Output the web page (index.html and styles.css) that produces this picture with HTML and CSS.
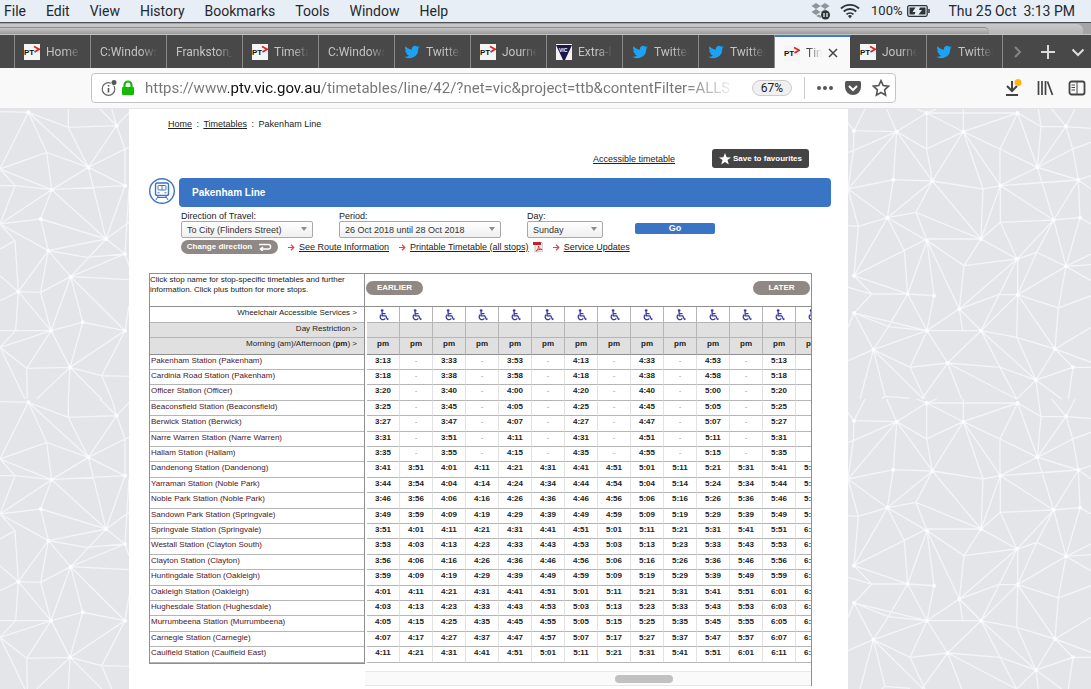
FILE: index.html
```
<!DOCTYPE html>
<html lang="en">
<head>
    <meta charset="utf-8">
    <title>Pakenham Line</title>
    <link rel="stylesheet" href="styles.css">
</head>
<body>
    <svg class="defs" width="0" height="0">
        <symbol id="ptv" viewBox="0 0 16 16">
            <rect width="16" height="16" fill="#f5f5f5"/>
            <text class="logo-text" x="0" y="11" fill="#111">PT</text>
            <path d="M10 2.500L15.200 5.200L10.500 8" fill="none" stroke="#e02020" stroke-width="1.600"/>
        </symbol>
        <symbol id="twitter" viewBox="0 0 24 24">
            <path fill="#1da1f2" d="M23.6 4.9c-.8.4-1.700.6-2.700.8 1-.6 1.700-1.500 2-2.600-.9.5-1.900.9-3 1.100a4.700 4.700 0 0 0-8 4.300C8 8.300 4.500 6.400 2.200 3.500a4.700 4.700 0 0 0 1.500 6.300c-.8 0-1.500-.2-2.100-.6 0 2.300 1.600 4.200 3.800 4.700-.7.2-1.400.2-2.100.1.6 1.900 2.300 3.200 4.400 3.300A9.500 9.500 0 0 1 .7 19.200 13.400 13.400 0 0 0 21.300 7.300c.9-.6 1.700-1.500 2.300-2.400z"/>
        </symbol>
        <symbol id="vic" viewBox="0 0 16 16">
            <rect width="16" height="16" fill="#f2f2f2"/>
            <path d="M0 1H16L9 16H7z" fill="#1d1748"/>
            <text class="logo-text small" x="3" y="8" fill="#fff">VIC</text>
        </symbol>
        <symbol id="wheelchair" viewBox="0 0 12 13">
            <circle cx="4.500" cy="1.700" r="1.500" fill="#3b3b9c"/>
            <path d="M4.500 3v4.500h4l1.800 3.700 1.300-.6M4.700 5h3.500M3.300 6.200a3.100 3.100 0 1 0 4.700 4" fill="none" stroke="#3b3b9c" stroke-width="1.400"/>
        </symbol>
        <symbol id="arrow" viewBox="0 0 7 7">
            <path d="M0 3.500h5.500M3 .8l2.800 2.700L3 6.200" fill="none" stroke="#e5404e" stroke-width="1.200"/>
        </symbol>
    </svg>

    <header class="menubar">
        <nav class="menus">
            <span>File</span><span>Edit</span><span>View</span><span>History</span><span>Bookmarks</span><span>Tools</span><span>Window</span><span>Help</span>
        </nav>
        <div class="status">
            <svg width="20" height="18" viewBox="0 0 20 18">
                <path d="M5 1l4.500 3L5 7 .5 4zM14 1l4.500 3L14 7 9.500 4zM5 7l4.500 3L5 13 .5 10zM14 7l4 3-4 3-4.500-3zM5 14l3-1.500 2 1.500v2z" fill="#8d949b"/>
                <circle cx="14.500" cy="13" r="4.500" fill="#2e3338"/>
                <path d="M13 11v4M16 11v4" stroke="#fff" stroke-width="1.200"/>
            </svg>
            <svg class="wifi" width="20" height="16" viewBox="0 0 20 16">
                <path d="M1 5.500a13 13 0 0 1 18 0M3.700 8.500a9.200 9.200 0 0 1 12.600 0M6.500 11.400a5.200 5.200 0 0 1 7 0" fill="none" stroke="#2e3338" stroke-width="1.800"/>
                <path d="M8 13l2 2.500 2-2.500a3 3 0 0 0-4 0z" fill="#2e3338"/>
            </svg>
            <span class="charge">100%</span>
            <svg width="24" height="14" viewBox="0 0 24 14">
                <rect x=".7" y="1.700" width="19.500" height="10.600" rx="1.500" fill="none" stroke="#2e3338" stroke-width="1.300"/>
                <path d="M2.500 3.500h6l-3 4.500h3l-1 2.500h-5zM13 3.500h5.500v7h-7l3.500-4.500h-3z" fill="#2e3338"/>
                <path d="M22 5v4" stroke="#2e3338" stroke-width="1.500"/>
            </svg>
            <span class="clock">Thu 25 Oct&nbsp; 3:13 PM</span>
        </div>
    </header>

    <div class="behind"><div class="behind-back"><div class="behind-front"></div></div></div>

    <div class="tabs">
        <div class="tab first"></div>
        <div class="tab"><svg><use href="#ptv"/></svg><span>Home</span></div>
        <div class="tab"><span>C:Windows</span></div>
        <div class="tab"><span>Frankston_</span></div>
        <div class="tab"><svg><use href="#ptv"/></svg><span>Timeta</span></div>
        <div class="tab"><span>C:Windows</span></div>
        <div class="tab"><svg><use href="#twitter"/></svg><span>Twitter</span></div>
        <div class="tab"><svg><use href="#ptv"/></svg><span>Journe</span></div>
        <div class="tab"><svg><use href="#vic"/></svg><span>Extra-l</span></div>
        <div class="tab"><svg><use href="#twitter"/></svg><span>Twitter</span></div>
        <div class="tab"><svg><use href="#twitter"/></svg><span>Twitter</span></div>
        <div class="tab active"><svg><use href="#ptv"/></svg><span>Tim</span>
            <button class="close" aria-label="Close tab"><svg viewBox="0 0 10 10"><path d="M1 1l8 8M9 1L1 9" stroke="#444" stroke-width="1.500"/></svg></button>
        </div>
        <div class="tab"><svg><use href="#ptv"/></svg><span>Journe</span></div>
        <div class="tab"><svg><use href="#twitter"/></svg><span>Twitter</span></div>
        <div class="tab-tools">
            <button aria-label="Scroll tabs"><svg width="14" height="14" viewBox="0 0 14 14"><path d="M4 2l5 5-5 5" fill="none" stroke="#858585" stroke-width="2"/></svg></button>
            <button aria-label="New tab"><svg width="14" height="14" viewBox="0 0 14 14"><path d="M7 0v14M0 7h14" stroke="#ddd" stroke-width="2"/></svg></button>
            <button aria-label="All tabs"><svg width="14" height="14" viewBox="0 0 14 14"><path d="M1.500 4.500L7 10l5.500-5.500" fill="none" stroke="#ddd" stroke-width="2"/></svg></button>
        </div>
    </div>

    <div class="toolbar">
        <div class="urlbar">
            <svg width="16" height="18" viewBox="0 0 16 18">
                <circle cx="7.500" cy="10" r="6.300" fill="none" stroke="#666" stroke-width="1.200"/>
                <path d="M7.500 9v4.500M7.500 6v1.600" stroke="#555" stroke-width="1.600"/>
                <circle cx="13" cy="3.500" r="3.300" fill="#fff"/><circle cx="13" cy="3.500" r="2.500" fill="#555"/>
            </svg>
            <svg class="lock" width="14" height="16" viewBox="0 0 14 16">
                <path d="M3.500 8V5a3.500 3.500 0 0 1 7 0v3" fill="none" stroke="#12bc00" stroke-width="2.200"/>
                <rect x="1" y="7" width="12" height="8" rx="1" fill="#12bc00"/>
            </svg>
            <input class="url" type="text" aria-label="Address" value="https://www.ptv.vic.gov.au/timetables/line/42/?net=vic&amp;project=ttb&amp;contentFilter=ALLS">
            <button class="zoom">67%</button>
            <div class="url-actions">
                <svg width="18" height="18" viewBox="0 0 18 18" fill="#555"><circle cx="3" cy="9" r="2"/><circle cx="9" cy="9" r="2"/><circle cx="15" cy="9" r="2"/></svg>
                <svg width="18" height="18" viewBox="0 0 18 18"><path d="M2.500 2h13Q17 2 17 3.500V8a8 8 0 0 1-16 0V3.500Q1 2 2.500 2z" fill="#555"/><path d="M5 7l4 4 4-4" fill="none" stroke="#fff" stroke-width="2"/></svg>
                <svg width="18" height="18" viewBox="0 0 18 18"><path d="M9 1.700l2.200 4.900 5.300.6-3.900 3.600 1 5.300L9 13.500l-4.600 2.600 1-5.300-3.900-3.600 5.300-.6z" fill="none" stroke="#555" stroke-width="1.600"/></svg>
            </div>
        </div>
        <div class="tools">
            <svg width="18" height="20" viewBox="0 0 18 20"><path d="M8 3v10M3 8l5 5 5-5M2 17h12" fill="none" stroke="#444" stroke-width="2"/><circle cx="14" cy="4.500" r="3.500" fill="#ffb515"/></svg>
            <svg width="18" height="18" viewBox="0 0 18 18"><path d="M2.500 2v14M6 2v14M9.500 2v14M11.500 2.500l5 13.500" fill="none" stroke="#444" stroke-width="1.700"/></svg>
            <svg width="18" height="18" viewBox="0 0 18 18"><rect x="1.500" y="2.500" width="15" height="13" rx="2" fill="none" stroke="#444" stroke-width="1.800"/><path d="M9 3v12M3.500 6h3.500M3.500 8.500h3.500M3.500 11h3.500" stroke="#444"/></svg>
        </div>
    </div>

    <div class="viewport">
        <svg class="mesh" viewBox="0 0 387 1740" preserveAspectRatio="xMinYMin slice">
            <g id="mesh-left">
                <path d="M0 8L85 10L205 55L350 50M85 10L0 180M85 10L140 130L155 242M85 10L265 175L140 130L0 180M205 0V55L265 175L350 50L300 0M335 0L350 50L387 10M350 50L375 120L265 175M387 115L375 120V230L265 175L155 242L0 180L45 230H0M45 230L155 242L375 230M45 230L0 345L155 242L122 330L0 345M122 330L145 425L0 345L45 395L55 548M45 395L0 420M155 242L318 390L265 175M375 230L318 390L122 330M318 390L145 425M387 470L375 435L318 390L212 503L375 435M318 390L387 340M375 435L387 240M145 425L260 445L375 435M145 425L212 503L387 512M145 425L55 548L0 500M145 425L122 550L55 548L0 575M122 550L212 503L153 665L122 550M212 503L248 640L153 665L47 665L55 548L153 665M212 503L375 665L248 640L210 775L375 665L387 590M375 665L305 800L210 775L153 665M47 665L0 715L153 665L80 778L0 715M80 778L210 775M80 778L82 870M47 665H0M0 715L75 870M110 870L210 775L205 870M210 775L305 870M305 800L387 802M305 800L335 870"/>
                <path class="nodes" d="M85 10h0M350 50h0M265 175h0M155 242h0M375 230h0M122 330h0M318 390h0M145 425h0M375 435h0M212 503h0M55 548h0M248 640h0M153 665h0M375 665h0M210 775h0"/>
            </g>
            <use href="#mesh-left" y="870"/>
        </svg>

        <main class="page">
            <nav class="crumbs"><a href="#">Home</a> <i>:</i> <a href="#">Timetables</a> <i>:</i> Pakenham Line</nav>

            <div class="actions">
                <a href="#">Accessible timetable</a>
                <button class="save"><svg width="12" height="12" viewBox="0 0 12 12"><path d="M6 0l1.600 4.200 4.400.2-3.500 2.700L9.800 11.500 6 9 2.200 11.500l1.300-4.400L0 4.400l4.400-.2z" fill="#fff"/></svg>Save to favourites</button>
            </div>

            <div class="line">
                <svg width="26" height="26" viewBox="0 0 26 26" fill="none" stroke="#3a74c4">
                    <circle cx="13" cy="13" r="12.300" stroke-width="1.400"/>
                    <rect x="6.500" y="5" width="13" height="12.500" rx="1.800" stroke-width="1.400"/>
                    <rect x="9" y="7.500" width="8" height="4.500" rx=".6"/>
                    <path d="M13 7.500V12M8.500 14.800h2M15.500 14.800h2M9.500 17.500L7 22M16.500 17.500L19 22M8.500 19.500h9"/>
                </svg>
                <h1>Pakenham Line</h1>
            </div>

            <form class="filters" onsubmit="return false">
                <div class="field direction">
                    <label for="direction">Direction of Travel:</label>
                    <div class="select"><select id="direction"><option>To City (Flinders Street)</option></select></div>
                </div>
                <div class="field period">
                    <label for="period">Period:</label>
                    <div class="select"><select id="period"><option>26 Oct 2018 until 28 Oct 2018</option></select></div>
                </div>
                <div class="field day">
                    <label for="day">Day:</label>
                    <div class="select"><select id="day"><option>Sunday</option></select></div>
                </div>
                <button class="go">Go</button>
            </form>

            <div class="links">
                <button class="pill change">Change direction
                    <svg width="14" height="8" viewBox="0 0 14 8"><path d="M1 1.500h9.500a2 2 0 0 1 2 2.500a2 2 0 0 1-2 2H3M5 4L2.500 6 5 8" fill="none" stroke="#fff" stroke-width="1.500"/></svg>
                </button>
                <span class="link"><svg><use href="#arrow"/></svg><a href="#">See Route Information</a></span>
                <span class="link"><svg><use href="#arrow"/></svg><a href="#">Printable Timetable (all stops)</a><svg class="pdf" viewBox="0 0 10 10"><path d="M2 0h6l2 2v8H2z" fill="#eee" stroke="#aaa" stroke-width=".7"/><path d="M0 0h8v3H0z" fill="#c2202a"/><path d="M3 9c2-1.500 2.500-3 2.500-5 0 2 1.500 3 3.500 3.500-2-.3-4 0-6 1.500" fill="none" stroke="#d33"/></svg></span>
                <span class="link"><svg><use href="#arrow"/></svg><a href="#">Service Updates</a></span>
            </div>

            <div class="timetable">
                <table class="stops">
                    <thead>
                        <tr class="intro"><th>Click stop name for stop-specific timetables and further information. Click plus button for more stops.</th></tr>
                        <tr class="access"><th>Wheelchair Accessible Services &gt;</th></tr>
                        <tr class="restrict"><th>Day Restriction &gt;</th></tr>
                        <tr class="ampm"><th>Morning (am)/Afternoon (<b>pm</b>) &gt;</th></tr>
                    </thead>
                    <tbody id="stops"></tbody>
                </table>
                <div class="services">
                    <div class="pager">
                        <button class="pill">EARLIER</button>
                        <button class="pill">LATER</button>
                    </div>
                    <table class="times">
                        <thead>
                            <tr class="access" id="access"></tr>
                            <tr class="restrict" id="restrict"></tr>
                            <tr class="ampm" id="ampm"></tr>
                        </thead>
                        <tbody id="times"></tbody>
                    </table>
                    <div class="track"><div class="thumb"></div></div>
                </div>
            </div>
        </main>

        <svg class="mesh" viewBox="9 0 729 1740" preserveAspectRatio="xMinYMin slice">
            <g id="mesh-right">
                <path d="M245 12H518M215 0L245 12L275 0M245 12L155 68L27 65L60 0M0 30L27 65L25 125L9 240M155 68L125 0M155 68L245 120L245 12M155 68L25 125L9 130M155 68L9 240M155 68L145 212L262 216L245 120L355 68L245 12M155 68L262 216L355 68L518 12M355 68V0M355 68L414 240L262 216M355 68L466 230M355 68L465 120L518 12L588 53H663L738 58M518 12L577 175L588 53L580 0M465 120V230L577 175L465 120M620 0L663 52L690 0M663 52L577 175L683 120L663 52M738 100L683 120L700 213L577 175L626 333L466 230L700 213L738 200M577 175L683 120M700 213L626 333L705 326L700 213L738 240M145 212L9 240L127 326L145 212M262 216L127 326L213 310L262 216L408 390L414 240L466 230L408 390L213 310L246 395L127 326L40 352L9 350M9 240L40 352L27 500L127 326L178 425L188 555M466 230V340L626 333L516 450L466 340L408 390H246L27 500M246 395L188 555L27 500L80 555H188L267 560L246 395L343 600L357 470L246 395M357 470L408 390L516 450L357 470M516 450L343 600L460 557H518V450L575 430L626 333L663 472L705 326L738 345M516 450L408 665L518 557L575 430L663 472L738 435M663 472L738 467M663 472L738 515M663 472L518 557L640 597L663 472M738 560L640 597L630 720L518 557L515 685L630 720L738 655M9 535L80 555L27 612L9 655M27 612L130 653L188 555L246 665L130 653L85 722L27 612L246 665M267 560L246 665L343 600L353 665M343 600L408 665H246L85 722L9 755M246 665L195 775L85 722L45 870M246 665L308 762L408 665L515 685L573 813L630 720L684 775H738M630 720L738 760M408 665L465 775L573 813L408 665M465 775L308 762L195 775L240 870M308 762L230 870M308 762L350 870M308 762L515 870M465 775L515 870L573 813L684 775L670 870M573 813L580 870M573 813L650 870M85 722L120 862L195 868M85 722L235 870M120 862L110 870"/>
                <path class="nodes" d="M245 12h0M518 12h0M155 68h0M355 68h0M27 65h0M663 52h0M577 175h0M145 212h0M262 216h0M466 230h0M700 213h0M127 326h0M626 333h0M705 326h0M246 395h0M408 390h0M516 450h0M663 472h0M27 500h0M188 555h0M267 560h0M343 600h0M518 557h0M27 612h0M246 665h0M408 665h0M85 722h0M630 720h0M308 762h0M573 813h0M684 775h0"/>
            </g>
            <use href="#mesh-right" y="870"/>
        </svg>
    </div>

    <script>
        // stop name, first departure, does every train stop here
        const stops = [
            ['Pakenham Station (Pakenham)', '3:13', false],
            ['Cardinia Road Station (Pakenham)', '3:18', false],
            ['Officer Station (Officer)', '3:20', false],
            ['Beaconsfield Station (Beaconsfield)', '3:25', false],
            ['Berwick Station (Berwick)', '3:27', false],
            ['Narre Warren Station (Narre Warren)', '3:31', false],
            ['Hallam Station (Hallam)', '3:35', false],
            ['Dandenong Station (Dandenong)', '3:41', true],
            ['Yarraman Station (Noble Park)', '3:44', true],
            ['Noble Park Station (Noble Park)', '3:46', true],
            ['Sandown Park Station (Springvale)', '3:49', true],
            ['Springvale Station (Springvale)', '3:51', true],
            ['Westall Station (Clayton South)', '3:53', true],
            ['Clayton Station (Clayton)', '3:56', true],
            ['Huntingdale Station (Oakleigh)', '3:59', true],
            ['Oakleigh Station (Oakleigh)', '4:01', true],
            ['Hughesdale Station (Hughesdale)', '4:03', true],
            ['Murrumbeena Station (Murrumbeena)', '4:05', true],
            ['Carnegie Station (Carnegie)', '4:07', true],
            ['Caulfield Station (Caulfield East)', '4:11', true]
        ];
        const trains = 14;
        const interval = 10;

        function addMinutes(time, minutes) {
            const parts = time.split(':');
            const total = parts[0] * 60 + Number(parts[1]) + minutes;
            return Math.floor(total / 60) + ':' + String(total % 60).padStart(2, '0');
        }

        function fill(id, html) {
            document.getElementById(id).innerHTML = html;
        }

        fill('access', '<td><svg class="chair"><use href="#wheelchair"/></svg></td>'.repeat(trains));
        fill('restrict', '<td></td>'.repeat(trains));
        fill('ampm', '<td>pm</td>'.repeat(trains));

        let names = '';
        let times = '';
        for (const [name, first, all] of stops) {
            names += '<tr><td><a href="#">' + name + '</a></td></tr>';
            times += '<tr>';
            for (let i = 0; i < trains; i++) {
                if (all || i % 2 === 0) {
                    times += '<td>' + addMinutes(first, i * interval) + '</td>';
                } else {
                    times += '<td class="none">-</td>';
                }
            }
            times += '</tr>';
        }
        fill('stops', names);
        fill('times', times);
    </script>
</body>
</html>
```
FILE: styles.css
```
* {
    box-sizing: border-box;
}

body {
    margin: 0;
    height: 100vh;
    display: flex;
    flex-direction: column;
    overflow: hidden;
    font-family: "Liberation Sans", Arial, sans-serif;
    font-size: 9px;
    line-height: 12px;
    color: #222;
}

button {
    font-family: inherit;
    border: none;
    padding: 0;
    cursor: pointer;
}

svg {
    flex: none;
    display: block;
}

.defs {
    position: absolute;
}

.logo-text {
    font-family: "Liberation Sans", Arial, sans-serif;
    font-size: 8px;
    font-weight: bold;
}

.logo-text.small {
    font-size: 5px;
}

/* menu bar */
.menubar {
    display: flex;
    justify-content: space-between;
    align-items: center;
    height: 23px;
    flex: none;
    padding: 0 16px 0 4px;
    background: #e8eef5;
    border-bottom: 1px solid #4b5055;
    font-family: Roboto, sans-serif;
    font-size: 14px;
    line-height: 20px;
    color: #23282d;
}

.menus {
    display: flex;
    gap: 20px;
}

.status {
    display: flex;
    align-items: center;
}

.wifi {
    margin: 0 11px 0 9px;
}

.charge {
    font-size: 13px;
    margin-right: 4px;
}

.clock {
    margin-left: 18px;
}

.behind {
    height: 12px;
    flex: none;
    padding: 1px 8px 0 0;
    background: #a5a5a5;
    border-bottom: 1px solid #c4c4c4;
}

.behind-back {
    height: 100%;
    padding: 3px 94px 0 0;
    background: linear-gradient(#c9c9c9, #b5b5b5);
    border-radius: 0 6px 0 0;
}

.behind-front {
    height: 100%;
    border-top: 1px solid #8f8f8f;
    border-radius: 0 5px 0 0;
    background: linear-gradient(#c4c4c4, #9b9b9b);
}

/* tabs */
.tabs {
    display: flex;
    height: 33px;
    flex: none;
    background: #484848;
    font-family: Roboto, sans-serif;
    font-size: 12px;
    color: #c4c4c4;
}

.tab {
    display: flex;
    align-items: center;
    gap: 6px;
    width: 76px;
    flex: none;
    padding: 0 9px;
    border-right: 1px solid #8a8a8a;
    overflow: hidden;
}

.tab.first {
    width: 15px;
    padding: 0;
}

.tab svg {
    width: 16px;
    height: 16px;
}

.tab span {
    flex: 1;
    overflow: hidden;
    line-height: 16px;
    white-space: nowrap;
    -webkit-mask-image: linear-gradient(to left, transparent, #000 16px);
    mask-image: linear-gradient(to left, transparent, #000 16px);
}

.tab.active {
    padding-right: 12px;
    background: #f9f9fa;
    border-top: 2px solid #3a7bd0;
    border-right-color: #484848;
    color: #222;
}

.close {
    background: none;
}

.close svg {
    width: 10px;
    height: 10px;
}

.tab-tools {
    flex: 1;
    display: flex;
    align-items: center;
    justify-content: space-between;
    padding: 0 6px 0 8px;
}

.tab-tools button {
    background: none;
}

/* address bar */
.toolbar {
    display: flex;
    align-items: center;
    justify-content: space-between;
    height: 41px;
    flex: none;
    padding: 0 5px 0 91px;
    background: #f9f9fa;
    border-bottom: 1px solid #e4e4e6;
}

.urlbar {
    display: flex;
    align-items: center;
    flex: 0 1 805px;
    height: 30px;
    padding: 0 5px 0 9px;
    background: #fff;
    border: 1px solid #c4c4c6;
    border-radius: 4px;
}

.lock {
    margin: 0 10px 0 4px;
}

.url {
    flex: 1;
    min-width: 0;
    margin-right: 16px;
    padding: 0;
    border: none;
    outline: none;
    font-family: Roboto, sans-serif;
    font-size: 15px;
    line-height: 20px;
    /* the host name is darker than the rest and the end fades out */
    color: transparent;
    background: linear-gradient(to right, #757575 83px, #111 83px, #111 176px, #757575 176px, #757575 540px, transparent);
    -webkit-background-clip: text;
    background-clip: text;
}

.zoom {
    width: 40px;
    height: 16px;
    border: 1px solid #ccc;
    border-radius: 8px;
    background: #f0f0f1;
    font-family: Roboto, sans-serif;
    font-size: 12px;
    line-height: 14px;
    color: #222;
}

.url-actions {
    display: flex;
    align-items: center;
    gap: 10px;
    height: 22px;
    margin-left: 12px;
    padding-left: 11px;
    border-left: 1px solid #ccc;
}

.tools {
    display: flex;
    align-items: center;
    gap: 14px;
}

/* page */
.viewport {
    flex: 1;
    min-height: 0;
    display: grid;
    grid-template-columns: 129px 719px 1fr;
    overflow: hidden;
    background: #e4e5e8;
}

.mesh {
    width: 100%;
    height: 580px;
    fill: none;
    stroke: #f4f5f6;
    stroke-width: 4;
}

.nodes {
    stroke: #fcfcfc;
    stroke-width: 12;
    stroke-linecap: round;
}

.page {
    padding: 9px 17px 0 20px;
    background: #fff;
}

.page a {
    color: inherit;
}

.crumbs {
    padding-left: 19px;
}

.crumbs i {
    font-style: normal;
    margin: 0 2px;
}

.actions {
    display: flex;
    align-items: center;
    justify-content: flex-end;
    gap: 37px;
    margin: 19px 22px 10px 0;
}

.save {
    display: flex;
    align-items: center;
    justify-content: center;
    gap: 2px;
    width: 97px;
    height: 19px;
    border-radius: 3px;
    background: #444;
    color: #fff;
    font-size: 8px;
    font-weight: bold;
}

.line {
    display: flex;
    gap: 4px;
}

.line h1 {
    flex: 1;
    margin: 0;
    padding-left: 13px;
    border-radius: 4px;
    background: #3a74c4;
    color: #fff;
    font-size: 10px;
    line-height: 29px;
}

.filters {
    display: flex;
    margin: 4px 0 2px;
    padding-left: 32px;
}

.field label {
    display: block;
    line-height: 10px;
}

.direction {
    width: 132px;
    margin-right: 26px;
}

.period {
    width: 162px;
    margin-right: 26px;
}

.day {
    width: 76px;
    margin-right: 32px;
}

.select {
    position: relative;
}

.select select {
    display: block;
    width: 100%;
    height: 17px;
    padding: 0 5px;
    appearance: none;
    border: 1px solid #a9a9a9;
    border-radius: 2px;
    background: linear-gradient(#fff, #efefef);
    font-family: inherit;
    font-size: 9px;
    color: #333;
}

.select::after {
    content: "";
    position: absolute;
    top: 6px;
    right: 6px;
    border: 3px solid transparent;
    border-top: 4px solid #8d8d8d;
    border-bottom: none;
}

.go {
    align-self: flex-end;
    width: 80px;
    height: 11px;
    margin-bottom: 4px;
    border-radius: 2px;
    background: #3a74c4;
    color: #fff;
    font-size: 9px;
    font-weight: bold;
    line-height: 11px;
}

.links {
    display: flex;
    align-items: center;
    gap: 10px;
    padding-left: 32px;
}

.link {
    display: flex;
    align-items: center;
    gap: 4px;
}

.link svg {
    width: 7px;
    height: 7px;
}

.link .pdf {
    width: 10px;
    height: 10px;
}

.pill {
    height: 14px;
    width: 57px;
    border-radius: 7px;
    background: #8f8884;
    color: #fff;
    font-size: 8px;
    font-weight: bold;
    line-height: 14px;
}

.change {
    display: flex;
    align-items: center;
    justify-content: center;
    gap: 6px;
    width: 97px;
}

/* timetable */
.timetable {
    display: flex;
    align-items: flex-start;
    margin: 19px 19px 0 0;
    font-size: 8px;
    line-height: 10px;
}

.timetable table {
    border-spacing: 0;
    table-layout: fixed;
}

.timetable th,
.timetable td {
    height: 15px;
    padding: 1px 0 0;
    border-bottom: 1px solid #b5b5b5;
    vertical-align: top;
    font-weight: normal;
}

/* every five rows share 77px */
.timetable tbody tr:nth-child(5n) td,
.timetable tbody tr:nth-child(5n + 3) td {
    height: 16px;
}

.stops {
    width: 216px;
    flex: none;
    border: 1px solid #8f8f8f;
}

.timetable .stops th {
    padding-right: 7px;
    text-align: right;
}

.timetable .stops td {
    padding-left: 1px;
    color: #4c1426;
}

.page .stops a {
    text-decoration: none;
}

.timetable .intro th {
    height: 33px;
    text-align: left;
    border-color: #8f8f8f;
}

.timetable .access > * {
    height: 16px;
}

.timetable .restrict > *,
.timetable .ampm > * {
    background: #e0e0e0;
}

.timetable .ampm > * {
    height: 17px;
    border-color: #8f8f8f;
}

.services {
    flex: 1;
    min-width: 0;
    overflow: hidden;
    border-top: 1px solid #8f8f8f;
    border-right: 1px solid #8f8f8f;
}

.pager {
    display: flex;
    justify-content: space-between;
    height: 33px;
    padding: 7px 1px 0;
    border-bottom: 1px solid #8f8f8f;
}

.times {
    width: 462px;
    margin-left: 2px;
}

.timetable .times td {
    border-right: 1px solid #e2e2e2;
    text-align: center;
    font-weight: bold;
}

.timetable .times thead td {
    border-right-color: #b5b5b5;
}

.timetable .times .none {
    color: #999;
    font-weight: normal;
}

.timetable .times .access td {
    padding-top: 2px;
}

.timetable .stops .intro th {
    text-align: left;
}

.chair {
    width: 11px;
    height: 12px;
    margin: 0 auto;
}

.track {
    height: 15px;
    margin-top: 8px;
    padding-top: 3px;
    background: #fafafa;
    border-top: 1px solid #e8e8e8;
    border-bottom: 1px solid #e8e8e8;
}

.thumb {
    width: 13%;
    height: 8px;
    margin-left: 56%;
    border-radius: 4px;
    background: #c1c1c1;
}
```
